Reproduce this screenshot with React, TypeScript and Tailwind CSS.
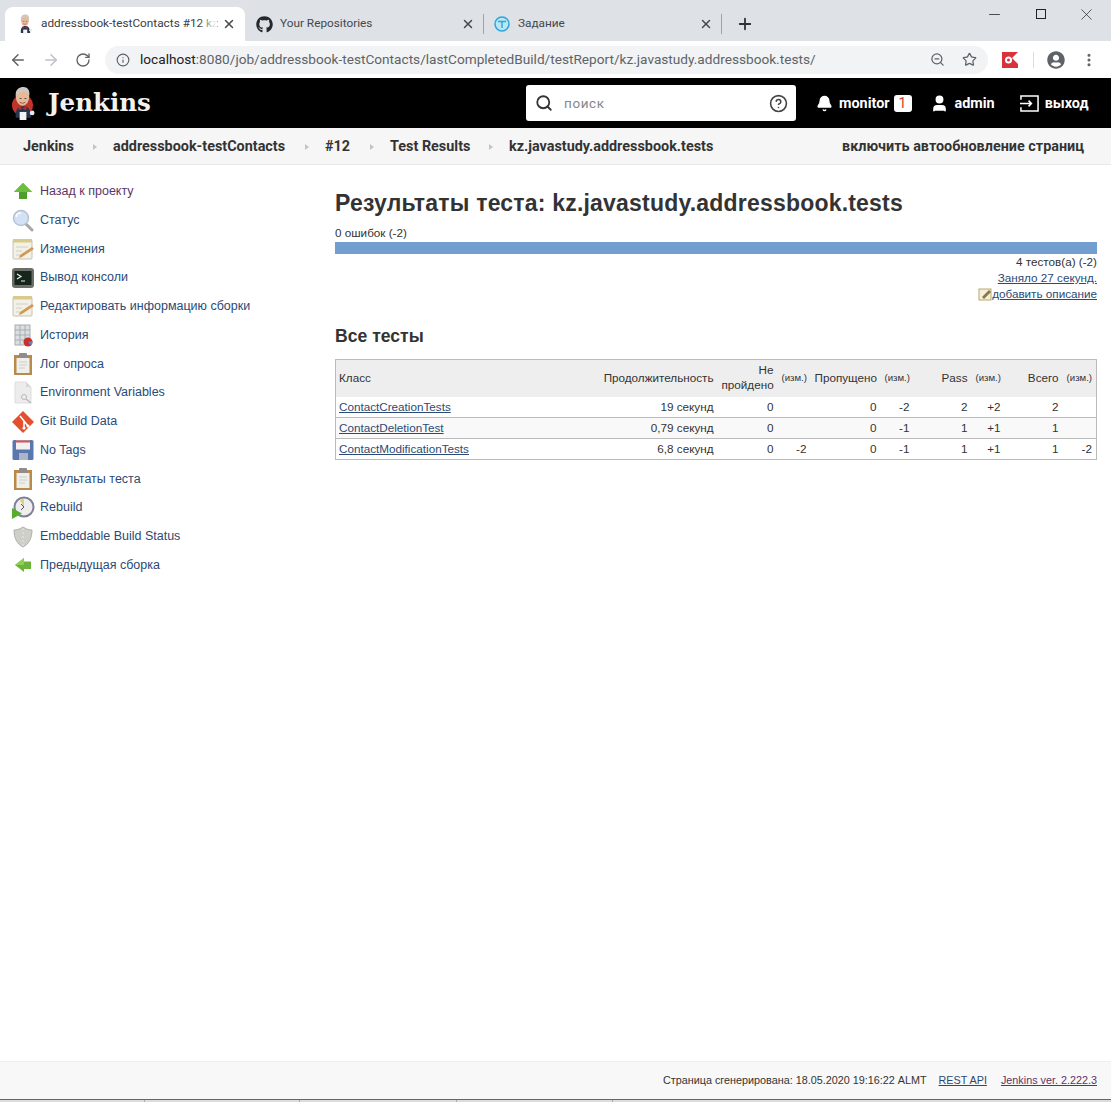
import { ReactNode } from 'react';
import { ArrowLeft, ArrowRight, RotateCw, Info, ZoomOut, Star, MoreVertical, X, Plus, Minus, Search, CircleHelp, Bell, User } from 'lucide-react';
import { FaGithub, FaUserCircle } from 'react-icons/fa';

const sidebarLinks: { label: string; icon: ReactNode; visited?: boolean }[] = [
  { label: 'Назад к проекту', icon: <UpArrowIcon />, visited: true },
  { label: 'Статус', icon: <MagnifierIcon /> },
  { label: 'Изменения', icon: <NotepadIcon /> },
  { label: 'Вывод консоли', icon: <TerminalIcon /> },
  { label: 'Редактировать информацию сборки', icon: <NotepadIcon /> },
  { label: 'История', icon: <HistoryIcon /> },
  { label: 'Лог опроса', icon: <ClipboardIcon /> },
  { label: 'Environment Variables', icon: <EnvIcon /> },
  { label: 'Git Build Data', icon: <GitIcon /> },
  { label: 'No Tags', icon: <FloppyIcon /> },
  { label: 'Результаты теста', icon: <ClipboardIcon /> },
  { label: 'Rebuild', icon: <RebuildIcon /> },
  { label: 'Embeddable Build Status', icon: <ShieldIcon /> },
  { label: 'Предыдущая сборка', icon: <LeftArrowIcon /> },
];

const rows = [
  { name: 'ContactCreationTests', time: '19 секунд', fail: '0', failDiff: '', skip: '0', skipDiff: '-2', pass: '2', passDiff: '+2', total: '2', totalDiff: '' },
  { name: 'ContactDeletionTest', time: '0,79 секунд', fail: '0', failDiff: '', skip: '0', skipDiff: '-1', pass: '1', passDiff: '+1', total: '1', totalDiff: '' },
  { name: 'ContactModificationTests', time: '6,8 секунд', fail: '0', failDiff: '-2', skip: '0', skipDiff: '-1', pass: '1', passDiff: '+1', total: '1', totalDiff: '-2' },
];

const crumbs = [
  { label: 'Jenkins', w: 'w-[90px]' },
  { label: 'addressbook-testContacts', w: 'w-[212px]' },
  { label: '#12', w: 'w-[65px]' },
  { label: 'Test Results', w: 'w-[119px]' },
];

function UpArrowIcon() {
  return (
    <svg viewBox="0 0 24 24" className="w-6 h-6">
      <path d="M12 4 L21 13 H16 V20 H8 V13 H3 Z" fill="#4f9e2b" />
      <path d="M12 4 L21 13 H3 Z" fill="#6cbf3a" />
    </svg>
  );
}

function LeftArrowIcon() {
  return (
    <svg viewBox="0 0 24 24" className="w-6 h-6">
      <path d="M4 12 L13 5 V8.5 H20 V16 H13 V19 Z" fill="#6cb33a" />
      <path d="M4 12 L13 5 V12 Z" fill="#8ccf55" />
    </svg>
  );
}

function MagnifierIcon() {
  return (
    <svg viewBox="0 0 24 24" className="w-6 h-6">
      <path d="M14 15 L21 22" stroke="#a8a8a8" strokeWidth="3" strokeLinecap="round" />
      <circle cx="10" cy="10" r="7.5" fill="#d2e2f4" stroke="#b5c3d4" strokeWidth="1.5" />
      <path d="M5 9 a5 5 0 0 1 5 -4" stroke="#fff" strokeWidth="1.5" fill="none" />
    </svg>
  );
}

function NotepadIcon() {
  return (
    <svg viewBox="0 0 24 24" className="w-6 h-6">
      <rect x="2" y="3" width="19" height="19" rx="1" fill="#f3f1e6" stroke="#c4c2b4" />
      <rect x="2" y="2" width="19" height="3.5" fill="#d9c98c" />
      <path d="M5 10 H17 M5 14 H11 M5 18 H9" stroke="#d0d0c8" />
      <path d="M9 18 L21 10 L23 12 L11 20 L8 21 Z" fill="#cf9a58" />
    </svg>
  );
}

function TerminalIcon() {
  return (
    <svg viewBox="0 0 24 24" className="w-6 h-6">
      <rect x="1" y="2" width="22" height="20" rx="3" fill="#6b6f68" />
      <rect x="3.5" y="5" width="17" height="14" fill="#17261c" />
      <path d="M6 8 L10 10.5 L6 13 M10 15 H14" stroke="#e8f0e8" strokeWidth="1.2" fill="none" />
    </svg>
  );
}

function HistoryIcon() {
  return (
    <svg viewBox="0 0 24 24" className="w-6 h-6">
      <rect x="4" y="2" width="15" height="20" fill="#dcdfe2" stroke="#a8acb0" />
      <path d="M4 7 H19 M4 12 H19 M4 17 H19 M9 2 V22 M14 2 V22" stroke="#a8acb0" />
      <circle cx="17" cy="19" r="4.5" fill="#c9302c" />
      <path d="M17 19 L21.5 18 A4.5 4.5 0 0 1 20 22.5 Z" fill="#6a7fb5" />
    </svg>
  );
}

function ClipboardIcon() {
  return (
    <svg viewBox="0 0 24 24" className="w-6 h-6">
      <rect x="3" y="3" width="18" height="20" fill="#b98a4c" />
      <rect x="5.5" y="6" width="13" height="15" fill="#eeeeea" />
      <rect x="8" y="1" width="8" height="5" rx="1" fill="#8d8d8d" />
      <path d="M8 10 H16 M8 13 H16 M8 16 H14" stroke="#cfcfca" />
    </svg>
  );
}

function EnvIcon() {
  return (
    <svg viewBox="0 0 24 24" className="w-6 h-6">
      <path d="M4 1 H15 L20 6 V22 H4 Z" fill="#ececec" stroke="#dedede" />
      <path d="M15 1 V6 H20" fill="#d8d8d8" />
      <circle cx="13" cy="16" r="2.5" fill="none" stroke="#b8b8b8" />
      <path d="M15 18 L20 22" stroke="#b8b8b8" strokeWidth="1.5" />
    </svg>
  );
}

function GitIcon() {
  return (
    <svg viewBox="0 0 24 24" className="w-6 h-6">
      <path d="M12 1 L23 12 L12 23 L1 12 Z" fill="#e2502f" />
      <path d="M9 6 L13 11 L17 16 M13 11 V18" stroke="#fff" strokeWidth="1.6" fill="none" />
      <circle cx="13" cy="18" r="1.6" fill="#fff" />
      <circle cx="17" cy="16" r="1.6" fill="#fff" />
    </svg>
  );
}

function FloppyIcon() {
  return (
    <svg viewBox="0 0 24 24" className="w-6 h-6">
      <rect x="1.5" y="2" width="21" height="20" rx="1.5" fill="#5a78ad" />
      <rect x="5" y="2.5" width="14" height="9" fill="#f1f1f1" />
      <rect x="5" y="2.5" width="14" height="2" fill="#d9534f" />
      <rect x="8" y="15" width="9" height="7" fill="#a9b5c8" />
    </svg>
  );
}

function RebuildIcon() {
  return (
    <svg viewBox="0 0 24 24" className="w-6 h-6">
      <circle cx="13" cy="11" r="9.5" fill="#eeeeee" stroke="#7d7f95" strokeWidth="2" />
      <path d="M13 11 L9 4 A8 8 0 0 1 13 3 Z" fill="#e0cd7e" />
      <path d="M13 11 L10 8 M13 11 L10 14" stroke="#555" />
      <path d="M1 12 L11 17.5 L1 23 Z" fill="#58ad2f" />
    </svg>
  );
}

function ShieldIcon() {
  return (
    <svg viewBox="0 0 24 24" className="w-6 h-6">
      <path d="M12 2 C15 4 18 5 21 5 C21 13 18 19 12 22 C6 19 3 13 3 5 C6 5 9 4 12 2 Z" fill="#cfcfca" stroke="#b0b0aa" />
      <path d="M12 3 V21" stroke="#e6e6e2" strokeDasharray="2 2" />
    </svg>
  );
}

// Jenkins butler, used in the header and on the tab
function ButlerHead({ size, ring = true }: { size: number; ring?: boolean }) {
  return (
    <svg viewBox="0 0 26 36" width={size} height={(size * 36) / 26}>
      {ring && <circle cx="12" cy="20" r="11" fill="#c0342c" />}
      <path d="M5 33 C4 25 7 21 13 21 C18 21 21 25 21 33 Z" fill="#27364f" />
      <ellipse cx="12" cy="11" rx="7" ry="9.5" fill="#e6b999" />
      <path d="M5 11 C4 3 9 1 13 1 C17 1 20 4 19 10 C17 7 15 6 12 6 C9 6 7 8 5 11 Z" fill="#cfc8c0" />
      <path d="M9 13 H11 M14 13 H16" stroke="#5a4636" strokeWidth="1" />
      <path d="M9 17 Q12 19 15 17" stroke="#8a5a48" strokeWidth="1" fill="none" />
      <path d="M8 21 L12 23.5 L16 21 L16 25 L12 23.5 L8 25 Z" fill="#c62a24" />
      <rect x="9" y="27" width="7" height="9" fill="#f4f4f4" />
      <circle cx="22" cy="28" r="2.5" fill="#e8e8e8" />
    </svg>
  );
}

function ExtensionIcon() {
  return (
    <svg viewBox="0 0 16 16" className="w-4 h-4">
      <path d="M0 0 H16 L10 6 L16 12 V16 H0 Z" fill="#d8323c" />
      <circle cx="6.5" cy="8" r="3.5" fill="#fff" />
      <circle cx="6.5" cy="8" r="1.5" fill="#d8323c" />
    </svg>
  );
}

function LogoutIcon() {
  return (
    <svg viewBox="0 0 22 20" className="w-[21px] h-[19px]" fill="none" stroke="white" strokeWidth="1.6">
      <path d="M2 6 V2 H20 V18 H2 V14" />
      <path d="M1 10 H13 M10 7 L13 10 L10 13" />
    </svg>
  );
}

function BrowserChrome() {
  return (
    <div className="bg-[#dee1e6] [font-family:Roboto,sans-serif]">
      <div className="h-[41px] flex items-end pl-[5px] relative">
        <div className="w-[240px] h-[34px] bg-white rounded-t-[8px] flex items-center pl-[13px] pr-[9px] shrink-0">
          <ButlerHead size={15} ring={false} />
          <div className="ml-[8px] relative w-[178px] whitespace-nowrap text-[11.8px] text-[#3c4043]">
            <span>addressbook-testContacts #12 kz</span>
            <span className="absolute right-[2px] top-0 bottom-0 w-[18px] bg-gradient-to-r from-transparent to-white" />
          </div>
          <X size={14} strokeWidth={2.5} className="text-[#45484c] ml-auto" />
        </div>
        <div className="w-[238px] h-[34px] flex items-center pl-[11px] pr-[8px] shrink-0">
          <FaGithub size={17} className="text-[#24292e]" />
          <span className="ml-[7px] text-[11.8px] text-[#45484c]">Your Repositories</span>
          <X size={14} strokeWidth={2.5} className="text-[#45484c] ml-auto" />
        </div>
        <div className="w-[239px] h-[34px] flex items-center pl-[11px] pr-[9px] shrink-0 relative">
          <span className="absolute left-0 top-[7px] w-px h-[20px] bg-[#9ea2a8]" />
          <svg viewBox="0 0 16 16" className="w-4 h-4 shrink-0">
            <circle cx="8" cy="8" r="7" fill="#b9e6f5" stroke="#2fa6d6" strokeWidth="1.5" />
            <path d="M4 5.5 H12 M8 5.5 V12" stroke="#2fa6d6" strokeWidth="1.4" fill="none" />
          </svg>
          <span className="ml-[8px] text-[11.8px] text-[#45484c]">Задание</span>
          <X size={14} strokeWidth={2.5} className="text-[#45484c] ml-auto" />
          <span className="absolute right-0 top-[7px] w-px h-[20px] bg-[#9ea2a8]" />
        </div>
        <Plus size={18} strokeWidth={2.4} className="text-[#2f3235] ml-[14px] mb-[8px]" />
        <div className="ml-auto self-start flex items-center h-[28px] pr-[15px] text-[#222]">
          <Minus size={17} strokeWidth={1.1} />
          <span className="w-[10px] h-[10px] border border-[#222] ml-[33px]" />
          <X size={19} strokeWidth={0.9} className="ml-[31px]" />
        </div>
      </div>
      <div className="h-[37px] bg-white flex items-center pl-[9px]">
        <ArrowLeft size={18} className="text-[#5f6368]" />
        <ArrowRight size={18} className="text-[#bdc1c6] ml-[15px]" />
        <RotateCw size={16} className="text-[#5f6368] ml-[15px]" />
        <div className="ml-[14px] w-[883px] h-[28px] rounded-full bg-[#f1f3f4] flex items-center pl-[11px] pr-[11px]">
          <Info size={14} className="text-[#5f6368]" />
          <span className="ml-[10px] text-[13.65px] text-[#5f6368] whitespace-nowrap">
            <span className="text-[#202124]">localhost</span>:8080/job/addressbook-testContacts/lastCompletedBuild/testReport/kz.javastudy.addressbook.tests/
          </span>
          <ZoomOut size={15} className="text-[#5f6368] ml-auto" />
          <Star size={15} className="text-[#5f6368] ml-[17px]" />
        </div>
        <div className="ml-[14px]"><ExtensionIcon /></div>
        <span className="ml-[15px] w-px h-[16px] bg-[#dadce0]" />
        <FaUserCircle size={18} className="ml-[13px] text-[#5f6368]" />
        <MoreVertical size={16} strokeWidth={2.6} className="ml-[16px] text-[#5f6368]" />
      </div>
    </div>
  );
}

function JenkinsHeader() {
  return (
    <div className="h-[50px] bg-black flex items-center pl-[11px] text-white [font-family:Roboto,sans-serif]">
      <ButlerHead size={25} />
      <span className="ml-[12px] w-[105px] whitespace-nowrap text-[24.5px] font-bold text-[#f2f2f2] [font-family:'DejaVu_Serif',serif]">Jenkins</span>
      <div className="ml-[373px] w-[270px] h-[36px] bg-white rounded-[3px] flex items-center pl-[9px] pr-[8px]">
        <Search size={18} strokeWidth={2.4} className="text-[#333]" />
        <span className="ml-[11px] text-[13.5px] tracking-[0.6px] text-[#888]">поиск</span>
        <CircleHelp size={19} className="ml-auto text-[#444]" />
      </div>
      <Bell size={17} fill="white" className="ml-[20px]" />
      <span className="ml-[6px] mt-[2px] text-[14.4px] font-bold">monitor</span>
      <span className="ml-[4px] w-[18px] h-[17px] rounded-[3px] bg-white text-[#d33833] text-[14px] leading-[17px] text-center">1</span>
      <User size={19} fill="white" className="ml-[18px]" />
      <span className="ml-[6px] mt-[2px] text-[14.4px] font-bold">admin</span>
      <div className="ml-[24px]"><LogoutIcon /></div>
      <span className="ml-[5px] mt-[2px] text-[14.4px] font-bold">выход</span>
    </div>
  );
}

function Breadcrumbs() {
  return (
    <div className="h-[37px] bg-[#f6f6f6] border-b border-[#e9e9e9] flex items-center pt-[2px] pl-[23px] pr-[27px] text-[14.4px] font-bold text-[#333] [font-family:Roboto,sans-serif]">
      {crumbs.map(c => (
        <div key={c.label} className={`flex items-center ${c.w}`}>
          <span>{c.label}</span>
          <span className="ml-auto mr-[16px] w-0 h-0 border-y-[3px] border-y-transparent border-l-[4px] border-l-[#c4c4c4]" />
        </div>
      ))}
      <span>kz.javastudy.addressbook.tests</span>
      <span className="ml-auto">включить автообновление страниц</span>
    </div>
  );
}

function Sidebar() {
  return (
    <div className="w-[335px] shrink-0 pl-[11px] pt-[12px]">
      {sidebarLinks.map(link => (
        <div key={link.label} className="h-[28.77px] flex items-center">
          {link.icon}
          <a href="#" className={`ml-[5px] text-[12.5px] [font-family:'Liberation_Sans',sans-serif] ${link.visited ? 'text-[#5c3566]' : 'text-[#2b4a75]'}`}>{link.label}</a>
        </div>
      ))}
    </div>
  );
}

function Diff({ children }: { children: ReactNode }) {
  return <span className="text-[9.6px] text-[#333]">{children}</span>;
}

function ResultsTable() {
  const th = 'px-[4px] pb-[2px] font-normal text-right align-middle';
  const td = 'px-[4px] pb-[1px] text-right h-[21px]';
  return (
    <table className="mt-[13px] w-full border border-[#bbb] border-collapse text-[11.7px] leading-[15px] text-[#333] table-fixed">
      <thead>
        <tr className="bg-[#eeeeee] h-[37px]">
          <th className="pl-[3px] pb-[2px] font-normal text-left w-[229px]">Класс</th>
          <th className={th + ' w-[153px]'}>Продолжительность</th>
          <th className={th + ' w-[60px]'}>Не пройдено</th>
          <th className={th + ' w-[33px]'}><Diff>(изм.)</Diff></th>
          <th className={th + ' w-[70px]'}>Пропущено</th>
          <th className={th + ' w-[33px]'}><Diff>(изм.)</Diff></th>
          <th className={th + ' w-[58px]'}>Pass</th>
          <th className={th + ' w-[33px]'}><Diff>(изм.)</Diff></th>
          <th className={th + ' w-[58px]'}>Всего</th>
          <th className={th}><Diff>(изм.)</Diff></th>
        </tr>
      </thead>
      <tbody>
        {rows.map((r, i) => (
          <tr key={r.name} className={i === 0 ? '' : i === 1 ? 'border-t border-[#bbb] bg-[#f9f9f9]' : 'border-t border-[#bbb]'}>
            <td className="pl-[3px] pb-[1px] text-left h-[21px]"><a href="#" className="underline text-[#2b4a75]">{r.name}</a></td>
            <td className={td}>{r.time}</td>
            <td className={td}>{r.fail}</td>
            <td className={td}>{r.failDiff}</td>
            <td className={td}>{r.skip}</td>
            <td className={td}>{r.skipDiff}</td>
            <td className={td}>{r.pass}</td>
            <td className={td}>{r.passDiff}</td>
            <td className={td}>{r.total}</td>
            <td className={td}>{r.totalDiff}</td>
          </tr>
        ))}
      </tbody>
    </table>
  );
}

function MainPanel() {
  return (
    <div className="w-[762px] shrink-0 pt-[24px] [font-family:'Liberation_Sans',sans-serif] text-[#333]">
      <h1 className="text-[23px] leading-[28px] font-bold tracking-[0.2px]">Результаты теста: kz.javastudy.addressbook.tests</h1>
      <div className="mt-[8px] mb-[2px] text-[11.7px] leading-[15px]">0 ошибок (-2)</div>
      <div className="h-[12px] bg-[#729fcf]" />
      <div className="text-right text-[11.7px] leading-[16px]">
        <div>4 тестов(а) (-2)</div>
        <a href="#" className="block underline text-[#2b4a75]">Заняло 27 секунд.</a>
        <a href="#" className="flex justify-end items-center underline text-[#2b4a75]">
          <svg viewBox="0 0 14 14" className="w-[14px] h-[14px]">
            <rect x="1" y="2" width="12" height="11" fill="#f3efdc" stroke="#b9a96a" />
            <path d="M4 10 L11 3 L13 5 L6 12 Z" fill="#8a7a3a" />
          </svg>
          добавить описание
        </a>
      </div>
      <h2 className="mt-[24px] text-[17.6px] leading-[20px] font-bold">Все тесты</h2>
      <ResultsTable />
    </div>
  );
}

function Footer() {
  return (
    <div className="h-[38px] bg-[#f8f8f8] border-t border-[#eee] flex items-center justify-end pr-[14px] text-[10.8px] [font-family:'Liberation_Sans',sans-serif] text-[#333]">
      <span>Страница сгенерирована: 18.05.2020 19:16:22 ALMT</span>
      <a href="#" className="ml-[12px] underline text-[#2b4a75]">REST API</a>
      <a href="#" className="ml-[14px] underline text-[#5c3566]">Jenkins ver. 2.222.3</a>
    </div>
  );
}

// sliver of the OS window's status bar below the page
function StatusBarEdge() {
  return (
    <div className="h-[3px] shrink-0 bg-[#dcdcdc] border-t border-[#666] flex">
      <span className="w-[145px] border-r border-[#aaa]" />
      <span className="w-[155px] border-r border-[#aaa]" />
      <span className="w-[157px] border-r border-[#aaa]" />
      <span className="w-[156px] border-r border-[#aaa]" />
    </div>
  );
}

export default function App() {
  return (
    <div className="w-[1111px] h-[1102px] flex flex-col bg-white overflow-hidden">
      <BrowserChrome />
      <JenkinsHeader />
      <Breadcrumbs />
      <div className="flex flex-1">
        <Sidebar />
        <MainPanel />
      </div>
      <Footer />
      <StatusBarEdge />
    </div>
  );
}
